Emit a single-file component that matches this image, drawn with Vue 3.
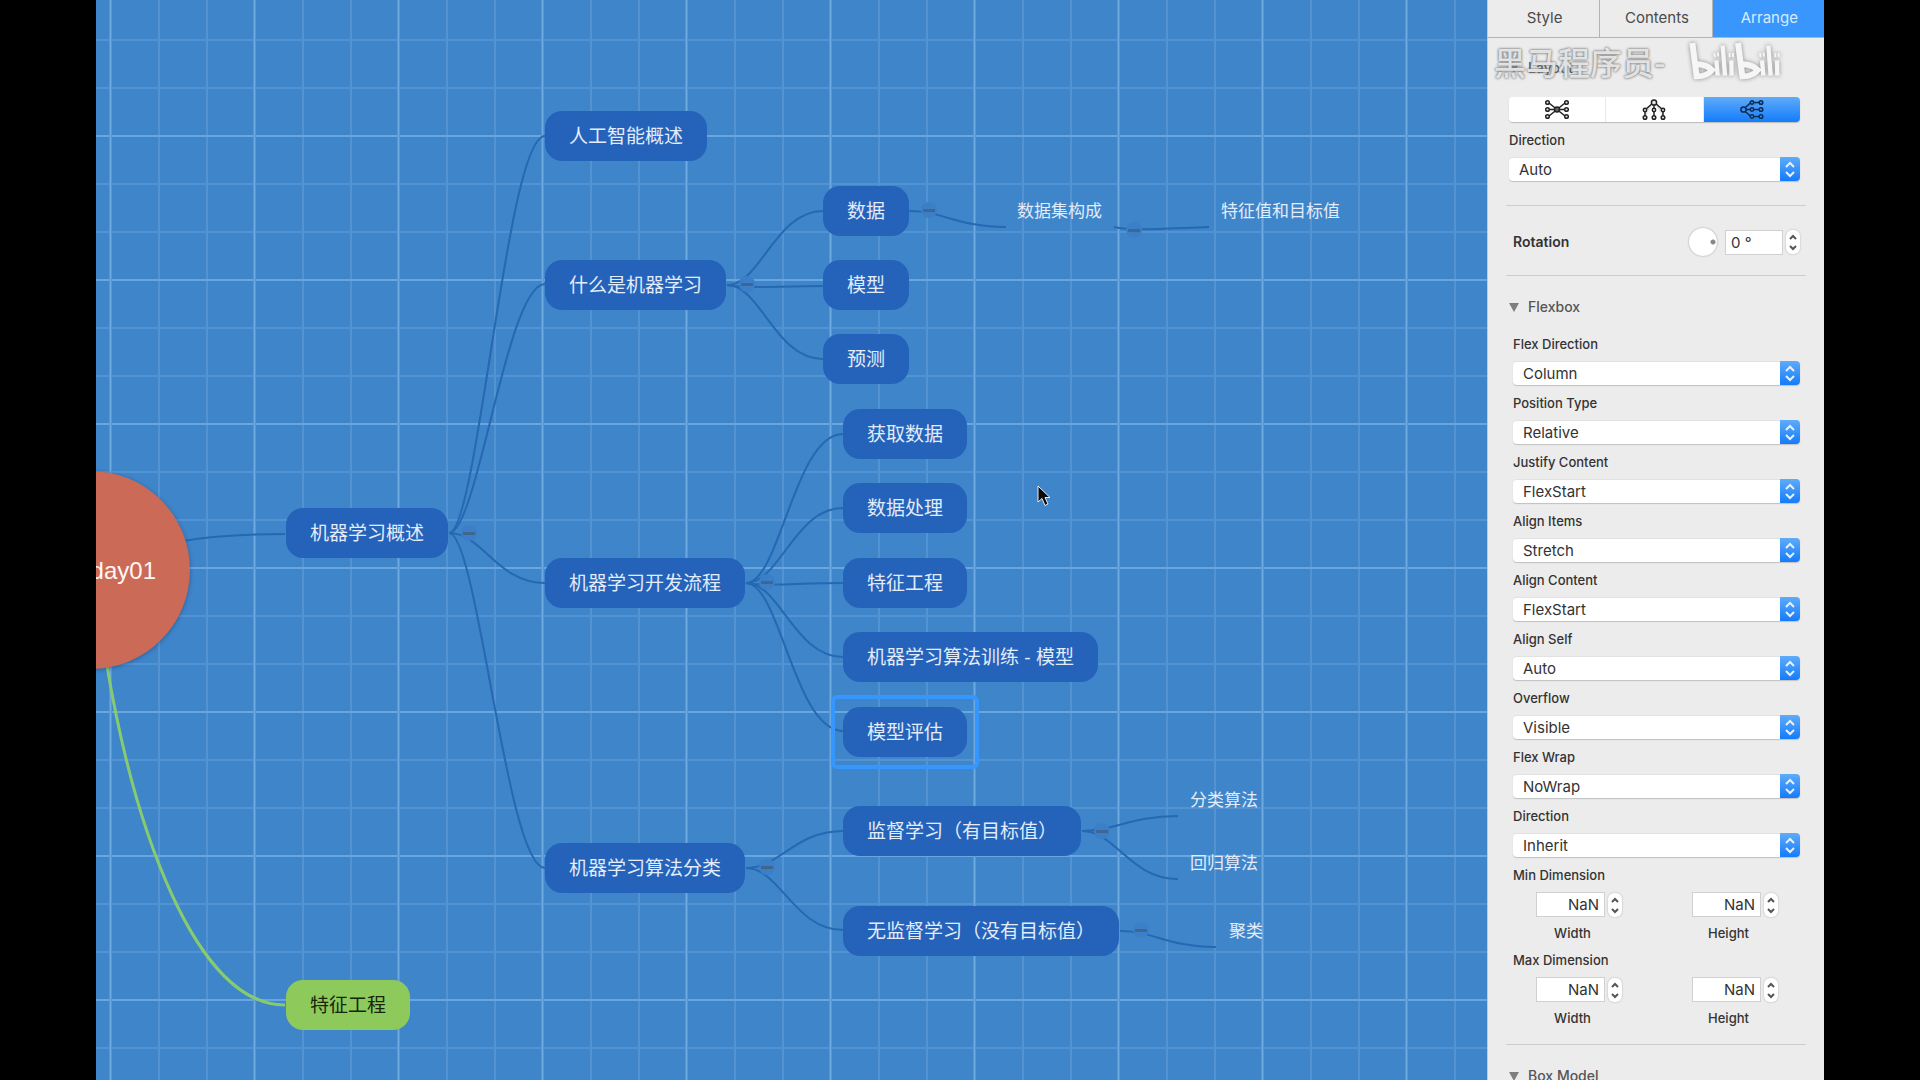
<script setup>
import { ref } from 'vue'

const tabs = ['Style', 'Contents', 'Arrange']
const activeTab = ref('Arrange')
const layouts = ['Horizontal', 'Top down', 'Tree']
const activeLayout = ref('Tree')

const nodes = [
  { text: '机器学习概述', x: 190, y: 508 },
  { text: '人工智能概述', x: 449, y: 111 },
  { text: '什么是机器学习', x: 449, y: 260 },
  { text: '机器学习开发流程', x: 449, y: 558 },
  { text: '机器学习算法分类', x: 449, y: 843 },
  { text: '数据', x: 727, y: 186 },
  { text: '模型', x: 727, y: 260 },
  { text: '预测', x: 727, y: 334 },
  { text: '获取数据', x: 747, y: 409 },
  { text: '数据处理', x: 747, y: 483 },
  { text: '特征工程', x: 747, y: 558 },
  { text: '机器学习算法训练 - 模型', x: 747, y: 632 },
  { text: '模型评估', x: 747, y: 707, selected: true },
  { text: '监督学习（有目标值）', x: 747, y: 806 },
  { text: '无监督学习（没有目标值）', x: 747, y: 906 },
  { text: '特征工程', x: 190, y: 980, green: true },
]

const leaves = [
  { text: '数据集构成', x: 921, y: 212 },
  { text: '特征值和目标值', x: 1125, y: 212 },
  { text: '分类算法', x: 1094, y: 801 },
  { text: '回归算法', x: 1094, y: 864 },
  { text: '聚类', x: 1133, y: 932 },
]

const toggles = [
  [373, 533], [651, 284], [833, 210], [1038, 230],
  [671, 582], [671, 867], [1006, 831], [1045, 930],
]

function curve(x1, y1, x2, y2, a = 0.35, b = 0.5) {
  const w = x2 - x1
  return `M${x1} ${y1} C${x1 + w * a} ${y1} ${x1 + w * b} ${y2} ${x2} ${y2}`
}

const edges = [
  'M80 542 Q125 534 189 534',
  curve(353, 533, 449, 136, 0.3, 0.6),
  curve(353, 533, 449, 284, 0.3, 0.6),
  curve(353, 533, 449, 583),
  curve(353, 533, 449, 868, 0.3, 0.6),
  curve(631, 285, 727, 211),
  'M631 285 C650 289 680 286 727 286',
  curve(631, 285, 727, 359),
  curve(650, 583, 747, 434),
  curve(650, 583, 747, 508),
  'M650 583 C669 587 700 583 747 583',
  curve(650, 583, 747, 657),
  curve(650, 583, 747, 731),
  curve(813, 211, 910, 227),
  'M1018 227 C1036 231 1060 229 1113 227',
  curve(650, 868, 747, 831),
  curve(650, 868, 747, 930),
  curve(986, 831, 1082, 816),
  curve(986, 831, 1082, 879),
  curve(1024, 931, 1120, 947),
]

const fields = [
  ['Flex Direction', 'Column'],
  ['Position Type', 'Relative'],
  ['Justify Content', 'FlexStart'],
  ['Align Items', 'Stretch'],
  ['Align Content', 'FlexStart'],
  ['Align Self', 'Auto'],
  ['Overflow', 'Visible'],
  ['Flex Wrap', 'NoWrap'],
  ['Direction', 'Inherit'],
].map(([label, value], i) => ({ id: `flex-${i}`, label, value }))

const dimensions = ['Min', 'Max']
const sides = ['Width', 'Height']
</script>

<template>
  <div class="app">
    <main class="canvas">
      <svg class="edges" aria-hidden="true">
        <path v-for="(d, i) in edges" :key="i" :d="d" />
        <path class="green" d="M10 660 C38 830 100 1005 189 1005" />
      </svg>
      <div class="root"><span>day01</span></div>
      <div
        v-for="(n, i) in nodes"
        :key="i"
        class="node"
        :class="{ green: n.green, selected: n.selected }"
        :style="{ left: n.x + 'px', top: n.y + 'px' }"
      >{{ n.text }}</div>
      <div
        v-for="l in leaves"
        :key="l.text"
        class="leaf"
        :style="{ left: l.x + 'px', top: l.y + 'px' }"
      >{{ l.text }}</div>
      <button
        v-for="([x, y], i) in toggles"
        :key="i"
        class="toggle"
        type="button"
        aria-label="Collapse"
        :style="{ left: x + 'px', top: y + 'px' }"
      ></button>
      <svg class="cursor" viewBox="0 0 14 22" aria-hidden="true">
        <path d="M1 1V17L5 13.5L8 20.5L11 19L8 12.5H13Z" />
      </svg>
    </main>

    <aside class="panel">
      <nav class="tabs">
        <button
          v-for="t in tabs"
          :key="t"
          type="button"
          :class="{ active: t === activeTab }"
          @click="activeTab = t"
        >{{ t }}</button>
      </nav>

      <section class="layout">
        <h2 class="heading"><i class="caret"></i>Layout</h2>
        <div class="segments">
          <button
            v-for="l in layouts"
            :key="l"
            type="button"
            :aria-label="l"
            :class="{ active: l === activeLayout }"
            @click="activeLayout = l"
          >
            <svg v-if="l === 'Horizontal'" viewBox="0 0 24 22">
              <path d="M4 4L20 17M20 4L4 17M4 10.5H20" />
              <circle cx="12" cy="10.5" r="2.5" fill="#666" />
              <g v-for="y in [3.5, 10.5, 17.5]" :key="y">
                <circle cx="2.5" :cy="y" r="1.8" /><circle cx="21.5" :cy="y" r="1.8" />
              </g>
            </svg>
            <svg v-else-if="l === 'Top down'" viewBox="0 0 24 22">
              <path d="M12 3L3 11V18M12 3V18M12 3L21 11V18" />
              <circle cx="12" cy="3.5" r="2.6" />
              <g v-for="x in [3, 12, 21]" :key="x">
                <circle :cx="x" cy="11" r="1.7" /><circle :cx="x" cy="18.5" r="1.8" />
              </g>
            </svg>
            <svg v-else viewBox="0 0 24 22">
              <path d="M3 10.5L11 3.5H21M3 10.5H21M3 10.5L11 17.5H21" />
              <circle cx="3.5" cy="10.5" r="2.6" />
              <g v-for="y in [3.5, 10.5, 17.5]" :key="y">
                <circle cx="12" :cy="y" r="1.7" /><circle cx="21" :cy="y" r="1.8" />
              </g>
            </svg>
          </button>
        </div>
        <div class="field">
          <label for="layout-direction">Direction</label>
          <div class="select">
            <select id="layout-direction"><option>Auto</option></select>
            <span class="arrows"><svg viewBox="0 0 20 24"><path d="M6 10L10 6L14 10M6 15L10 19L14 15" /></svg></span>
          </div>
        </div>
      </section>

      <section class="rotation">
        <label for="rotation">Rotation</label>
        <button class="dial" type="button" aria-label="Rotation dial"></button>
        <input id="rotation" type="text" value="0 °" />
        <span class="stepper">
          <button type="button" aria-label="Increase"><svg viewBox="0 0 14 12"><path d="M4 9L7 6L10 9" /></svg></button>
          <button type="button" aria-label="Decrease"><svg viewBox="0 0 14 12"><path d="M4 4L7 7L10 4" /></svg></button>
        </span>
      </section>

      <section class="flexbox">
        <h2 class="heading"><i class="caret"></i>Flexbox</h2>
        <div v-for="f in fields" :key="f.id" class="field">
          <label :for="f.id">{{ f.label }}</label>
          <div class="select">
            <select :id="f.id"><option>{{ f.value }}</option></select>
            <span class="arrows"><svg viewBox="0 0 20 24"><path d="M6 10L10 6L14 10M6 15L10 19L14 15" /></svg></span>
          </div>
        </div>
        <fieldset v-for="d in dimensions" :key="d" class="dimension">
          <legend>{{ d }} Dimension</legend>
          <div class="pair">
            <div v-for="s in sides" :key="s" class="size">
              <div class="entry">
                <input :id="d + s" type="text" value="NaN" />
                <span class="stepper">
                  <button type="button" aria-label="Increase"><svg viewBox="0 0 14 12"><path d="M4 9L7 6L10 9" /></svg></button>
                  <button type="button" aria-label="Decrease"><svg viewBox="0 0 14 12"><path d="M4 4L7 7L10 4" /></svg></button>
                </span>
              </div>
              <label :for="d + s">{{ s }}</label>
            </div>
          </div>
        </fieldset>
      </section>

      <section class="box-model">
        <h2 class="heading"><i class="caret"></i>Box Model</h2>
      </section>

      <div class="watermark">
        <span>黑马程序员-</span>
        <svg viewBox="39 18 300 132" role="img" aria-label="bilibili">
          <g v-for="x in [0, 137]" :key="x" :transform="`translate(${x} 0)`">
            <path class="bowl" d="M55 30L68 130Q98 131 114 111Q100 95 66 93" />
            <path class="stem" d="M127 82L131 128M146 38L153 128M172 82L173 128" />
            <path class="dot" d="M121 60L123 72M131 58L133 70M167 60V72M177 60V72" />
          </g>
        </svg>
      </div>
    </aside>
  </div>
</template>

<style>
body {
  margin: 0;
  background: #000;
}
</style>

<style scoped>
.app {
  display: flex;
  box-sizing: border-box;
  height: 100vh;
  padding: 0 5%;
  overflow: hidden;
  background: #000;
  font-family: Inter, "Noto Sans CJK SC", sans-serif;
}

button,
input,
select {
  margin: 0;
  padding: 0;
  border: 0;
  font: inherit;
  color: inherit;
}

.canvas {
  position: relative;
  flex: 1;
  min-width: 0;
  overflow: hidden;
  background-color: #3f85ca;
  background-image:
    linear-gradient(90deg, #5797d6 1px, #6da8df 1px, #6da8df 2px, #5797d6 2px, #5797d6 3px, transparent 3px),
    linear-gradient(#69a5de 2px, transparent 2px),
    linear-gradient(90deg, #5493d1 2px, transparent 2px),
    linear-gradient(#5493d1 2px, transparent 2px);
  background-size: 144px 144px, 144px 144px, 48px 48px, 48px 48px;
  background-position: 13px 0, 0 135px, 14px 0, 0 39px;
  font-family: "Liberation Sans", "Noto Sans CJK SC", sans-serif;
}

.edges {
  position: absolute;
  inset: 0;
  width: 100%;
  height: 100%;
  fill: none;
  stroke: #2668b2;
  stroke-width: 2;
}

.edges .green {
  stroke: #87cb70;
  stroke-width: 3;
}

.root {
  position: absolute;
  left: -104px;
  top: 471px;
  display: flex;
  align-items: center;
  justify-content: flex-end;
  box-sizing: border-box;
  width: 198px;
  height: 198px;
  padding: 2px 34px 0 0;
  border-radius: 50%;
  background: #cb6a56;
  box-shadow: 0 1px 4px rgba(0, 40, 90, 0.4);
  color: #fff7f5;
  font-size: 24px;
}

.node {
  position: absolute;
  padding: 1px 24px 0;
  border-radius: 17px;
  background: #2563bb;
  color: #e2ecfa;
  font-size: 19px;
  line-height: 49px;
  white-space: nowrap;
}

.node.green {
  background: #8eca5b;
  color: #16250c;
}

.node.selected::after {
  content: "";
  position: absolute;
  inset: -12px;
  border: 4px solid #3596fd;
  border-radius: 6px;
}

.leaf {
  position: absolute;
  color: #e2ecfa;
  font-size: 17px;
  line-height: 24px;
  white-space: nowrap;
  transform: translateY(-50%);
}

.toggle {
  position: absolute;
  width: 16px;
  height: 16px;
  border-radius: 50%;
  background: linear-gradient(#3f668f, #3f668f) center / 12px 3px no-repeat #3a7fc8;
  transform: translate(-50%, -50%);
}

.cursor {
  position: absolute;
  left: 941px;
  top: 485px;
  width: 14px;
  height: 22px;
  fill: #0b0b0b;
  stroke: #e8eef5;
  stroke-width: 1;
}

.panel {
  position: relative;
  flex: none;
  width: 336px;
  border-left: 1px solid #b9cde2;
  background: #ececec;
  color: #333;
  font-size: 13px;
  font-weight: 500;
  line-height: 18px;
}

.tabs {
  display: flex;
  height: 37px;
  border-bottom: 1px solid #b4b4b4;
}

.tabs button {
  flex: 1;
  padding: 0 0 2px 2px;
  border-right: 1px solid #b4b4b4;
  background: #ececec;
  color: #4a4a4a;
  font-size: 15px;
  font-weight: 400;
}

.tabs button.active {
  border-right: 0;
  background: #3896fc;
  color: #d9ebff;
}

.layout {
  padding: 0 24px 25px 21px;
}

.layout,
.rotation,
.flexbox {
  position: relative;
}

.layout::after,
.rotation::after,
.flexbox::after {
  content: "";
  position: absolute;
  left: 18px;
  right: 18px;
  bottom: 0;
  height: 1px;
  background: #cecece;
}

.heading {
  display: flex;
  align-items: center;
  gap: 9px;
  margin: 0;
  color: #555;
  font-size: 14px;
  font-weight: 500;
  line-height: 18px;
}

.layout .heading {
  padding: 21px 0 20px;
}

.caret {
  border: 5px solid transparent;
  border-top: 9px solid #7e7e7e;
  border-bottom: 0;
}

.segments {
  display: flex;
  height: 25px;
  margin-bottom: 9px;
  border-radius: 4px;
  overflow: hidden;
  background: #fff;
  box-shadow: 0 1px 1px #bbb;
}

.segments button {
  display: flex;
  align-items: center;
  justify-content: center;
  flex: 1;
  border-right: 1px solid #e8e8e8;
  background: #fff;
}

.segments button.active {
  border-right: 0;
  background: linear-gradient(#5fabf9, #147cfb);
}

.segments svg {
  width: 24px;
  height: 22px;
  fill: #e4e4e4;
  stroke: #222;
  stroke-width: 1.5;
}

.segments .active svg {
  fill: #3c90ee;
  stroke: #0c2c55;
}

.field label {
  display: block;
  padding-bottom: 8px;
}

.flexbox .field {
  padding-bottom: 9px;
}

.select {
  position: relative;
  height: 24px;
}

.select select {
  appearance: none;
  display: block;
  box-sizing: border-box;
  width: 100%;
  height: 24px;
  padding: 0 30px 0 10px;
  border-top: 1px solid #e2e2e2;
  border-radius: 4px;
  background: #fff;
  box-shadow: 0 1px 1px #c0c0c0;
  font-size: 15px;
  font-weight: 400;
  line-height: 23px;
}

.arrows {
  position: absolute;
  top: 0;
  right: 0;
  width: 20px;
  height: 24px;
  border-radius: 0 4px 4px 0;
  background: linear-gradient(#5facf9, #147bfb);
  pointer-events: none;
}

.arrows svg {
  display: block;
  fill: none;
  stroke: #e6f2ff;
  stroke-width: 2;
}

.rotation {
  display: flex;
  align-items: center;
  box-sizing: border-box;
  height: 70px;
  padding: 2px 24px 0 25px;
}

.rotation label {
  flex: 1;
  font-size: 14px;
  font-weight: 600;
}

.dial {
  width: 28px;
  height: 28px;
  margin-right: 8px;
  border-radius: 50%;
  background: radial-gradient(circle at 24px 14px, #888 2px, transparent 3px) #fff;
  box-shadow: 0 0 2px #999;
}

input {
  box-sizing: border-box;
  width: 58px;
  height: 25px;
  padding: 0 5px;
  border: 1px solid #d0d0d0;
  background: #fff;
  font-size: 15px;
  font-weight: 400;
}

.stepper {
  display: flex;
  flex-direction: column;
  width: 14px;
  height: 24px;
  margin-left: 3px;
  border-radius: 6px;
  background: #fff;
  box-shadow: 0 0 2px #aaa;
}

.stepper button {
  height: 12px;
  background: none;
}

.stepper svg {
  display: block;
  width: 14px;
  height: 12px;
  fill: none;
  stroke: #555;
  stroke-width: 2;
}

.flexbox {
  padding: 0 24px 18px 25px;
}

.flexbox .heading,
.box-model .heading {
  margin-left: -4px;
  padding: 22px 0 19px;
}

.box-model {
  padding: 0 24px 0 25px;
}

.dimension {
  margin: 0;
  padding: 0;
  border: 0;
}

.dimension + .dimension {
  margin-top: 9px;
}

.dimension legend {
  padding: 0 0 8px;
}

.pair {
  display: flex;
  justify-content: space-between;
  padding: 0 22px 0 23px;
}

.entry {
  display: flex;
  align-items: center;
}

.entry input {
  width: 69px;
  text-align: right;
}

.size label {
  display: block;
  width: 69px;
  padding: 7px 0 0 4px;
  box-sizing: border-box;
  text-align: center;
}

.watermark {
  position: absolute;
  left: 6px;
  top: 39px;
  display: flex;
  align-items: center;
  gap: 22px;
  color: rgba(244, 244, 244, 0.85);
  font-family: "Noto Sans CJK SC", sans-serif;
  font-size: 32px;
  font-weight: 500;
  line-height: 44px;
  text-shadow: 0 0 3px #777, 0 0 2px #888;
  white-space: nowrap;
  pointer-events: none;
}

.watermark svg {
  width: 100px;
  height: 44px;
  fill: none;
  stroke: #f6f6f6;
  filter: drop-shadow(0 0 2px #888);
}

.watermark .bowl {
  stroke-width: 18;
}

.watermark .stem {
  stroke-width: 13;
}

.watermark .dot {
  stroke-width: 6;
}
</style>
